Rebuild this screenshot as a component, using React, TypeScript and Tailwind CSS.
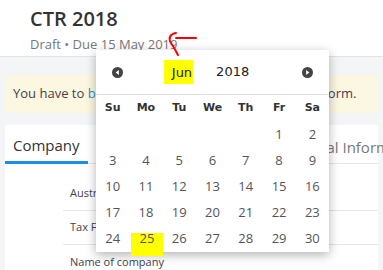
import React from "react";

const weekDays = ["Su", "Mo", "Tu", "We", "Th", "Fr", "Sa"];

// June 2018 starts on a Friday
const days: (number | null)[] = [
  null, null, null, null, null, 1, 2,
  ...Array.from({ length: 28 }, (_, i) => i + 3),
];

const Arrow = ({ dir }: { dir: "left" | "right" }) => (
  <svg width="11" height="11" viewBox="0 0 12 12">
    <circle cx="6" cy="6" r="6" fill="#444" />
    {dir === "left" ? (
      <path d="M7.5 3.2 L4 6 L7.5 8.8 Z" fill="#fff" />
    ) : (
      <path d="M4.5 3.2 L8 6 L4.5 8.8 Z" fill="#fff" />
    )}
  </svg>
);

const DatePicker = () => (
  <div className="absolute left-[96px] top-[50px] w-[233px] bg-white shadow-[0_3px_10px_rgba(0,0,0,0.3)] font-['DejaVu_Sans',sans-serif]">
    <div className="h-[45px] flex items-center justify-between px-[16px] border-b border-[#e3e3e3]">
      <Arrow dir="left" />
      <div className="flex items-center gap-[23px] text-[13px] text-[#222] mr-[12px]">
        <span className="bg-[#ffff00] pl-[8px] pr-[1px] leading-[23px] pt-[1px]">Jun</span>
        <span>2018</span>
      </div>
      <Arrow dir="right" />
    </div>
    <div className="grid grid-cols-7 h-[27px] items-center text-center text-[11px] font-bold text-[#333]">
      {weekDays.map((d) => (
        <span key={d}>{d}</span>
      ))}
    </div>
    <div className="grid grid-cols-7 text-center text-[13px] text-[#555] font-['Open_Sans',sans-serif]">
      {days.map((d, i) => (
        <div key={i} className="h-[26px] flex items-center justify-center">
          {d === 25 ? (
            <span className="bg-[#ffff00] w-[37px] h-[23px] leading-[11px] ml-[2px] translate-y-[5px] block">
              25
            </span>
          ) : (
            d
          )}
        </div>
      ))}
    </div>
  </div>
);

const FieldRow = ({ label, last }: { label: string; last?: boolean }) => (
  <div className={`ml-[58px] h-[34px] flex items-center pl-[7px] text-[11px] text-[#444] ${last ? "" : "border-b border-[#e6e6e6]"}`}>
    {label}
  </div>
);

export default function App() {
  return (
    <div className="relative w-[383px] h-[270px] overflow-hidden bg-[#f4f5f7] font-['Open_Sans',sans-serif]">
      <header className="h-[57px] bg-white border-b border-[#e2e2e2] px-[30px] pt-[5px]">
        <h1 className="text-[20px] leading-[28px] text-[#333] font-semibold">CTR 2018</h1>
        <p className="text-[13px] leading-[18px] mt-[2px] text-[#777]">
          Draft • Due 15 May 2019
        </p>
      </header>

      <main className="px-[5px] pt-[18px]">
        <div className="h-[38px] bg-[#fcf7e1] flex items-center px-[8px] text-[13px] text-[#4d3c4d] whitespace-nowrap overflow-hidden">
          You have to&nbsp;<span className="text-[#2a8fd9]">build the company details</span>&nbsp;on the main form.
        </div>

        <section className="mt-[12px] bg-white">
          <div className="flex items-end h-[39px] border-b border-[#e6e6e6] text-[15px] text-[#333] whitespace-nowrap">
            <div className="px-[8px] pb-[5px] border-b-[3px] border-[#1a8fe3] -mb-px">Company</div>
            <div className="px-[9px] pb-[5px] text-[#777]">Partnership</div>
            <div className="px-[9px] pb-[5px] text-[#777]">Trustee</div>
            <div className="px-[9px] pb-[5px] text-[#777]">Additional Information</div>
          </div>
          <div className="pt-[13px]">
            <FieldRow label="Australian business number" />
            <FieldRow label="Tax File Number" />
            <FieldRow label="Name of company" last />
          </div>
        </section>
      </main>

      <DatePicker />

      <svg className="absolute left-[165px] top-[28px]" width="34" height="30" viewBox="0 0 34 30">
        <path d="M11 5 C5 6 3 10 6 15 C8 18 10 21 13 27" stroke="#f00" strokeWidth="2" fill="none" strokeLinecap="round" />
        <path d="M11 10 L31 10" stroke="#f00" strokeWidth="2" fill="none" strokeLinecap="round" />
      </svg>
    </div>
  );
}
